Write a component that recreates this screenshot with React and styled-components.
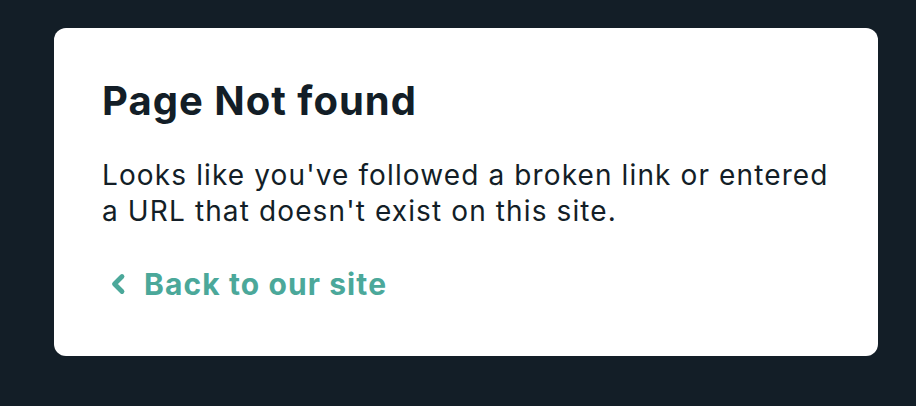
import React from "react";
import styled, { createGlobalStyle } from "styled-components";

const Global = createGlobalStyle`
  html, body { margin: 0; padding: 0; background: #131e27; }
  body { font-family: Inter, "Noto Sans", sans-serif; -webkit-font-smoothing: antialiased; }
`;

const Page = styled.div`
  min-height: 406px;
  box-sizing: border-box;
  padding: 28px 38px 0 54px;
  background: #131e27;
`;

const Card = styled.section`
  background: #ffffff;
  border-radius: 12px;
  height: 328px;
  box-sizing: border-box;
  padding: 49px 48px 0 48px;
  display: flex;
  flex-direction: column;
`;

const Title = styled.h1`
  margin: 0;
  font-size: 40px;
  line-height: 48px;
  font-weight: 700;
  color: #131e27;
  letter-spacing: 1px;
`;

const Text = styled.p`
  margin: 32px 0 0;
  font-size: 28px;
  line-height: 36px;
  font-weight: 400;
  color: #131e27;
  letter-spacing: 1.12px;
  max-width: 745px;
`;

const BackLink = styled.a`
  margin-top: 35px;
  display: inline-flex;
  align-items: center;
  gap: 18px;
  align-self: flex-start;
  font-size: 30px;
  line-height: 40px;
  font-weight: 700;
  color: #4ba89a;
  letter-spacing: 1.1px;
  text-decoration: none;
  padding-left: 8px;
`;

const Chevron = () => (
  <svg width="16" height="22" viewBox="0 0 16 22" aria-hidden="true">
    <path d="M12 3.5 L4.5 11 L12 18.5" fill="none" stroke="#4ba89a" strokeWidth="4.8" strokeLinecap="round" strokeLinejoin="round" />
  </svg>
);

export default function App() {
  return (
    <>
      <Global />
      <Page>
        <Card>
          <Title>Page Not found</Title>
          <Text>
            Looks like you've followed a broken link or entered a URL that doesn't exist on this site.
          </Text>
          <BackLink href="#">
            <Chevron />
            Back to our site
          </BackLink>
        </Card>
      </Page>
    </>
  );
}
